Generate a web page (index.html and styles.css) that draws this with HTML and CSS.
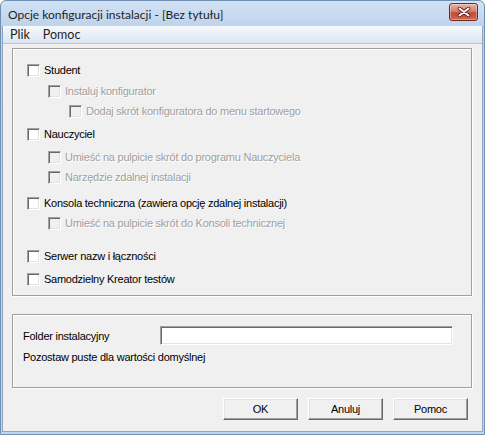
FILE: index.html
```html
<!DOCTYPE html>
<html lang="pl">
<head>
<meta charset="utf-8">
<title>Opcje konfiguracji instalacji</title>
<link rel="stylesheet" href="styles.css">
</head>
<body>
<div class="window">
  <div class="titlebar">
    <span class="title">Opcje konfiguracji instalacji - [Bez tytułu]</span>
    <span class="close">
      <svg width="14" height="10" viewBox="0 0 14 10">
        <path d="M2.5 1.5 L11.5 8.5 M11.5 1.5 L2.5 8.5" stroke="#5a1a12" stroke-width="3.6" stroke-linecap="round"/>
        <path d="M2.5 1.5 L11.5 8.5 M11.5 1.5 L2.5 8.5" stroke="#ffffff" stroke-width="2" stroke-linecap="round"/>
      </svg>
    </span>
  </div>
  <div class="client">
    <div class="menubar">
      <span class="menu-item">Plik</span>
      <span class="menu-item">Pomoc</span>
    </div>
    <div class="content">
      <div class="group group-options">
        <div class="row"><span class="cb"></span><span class="lbl">Student</span></div>
        <div class="row l1 sp1 off"><span class="cb"></span><span class="lbl">Instaluj konfigurator</span></div>
        <div class="row l2 off"><span class="cb"></span><span class="lbl">Dodaj skrót konfiguratora do menu startowego</span></div>
        <div class="row sp3"><span class="cb"></span><span class="lbl">Nauczyciel</span></div>
        <div class="row l1 sp3 off"><span class="cb"></span><span class="lbl">Umieść na pulpicie skrót do programu Nauczyciela</span></div>
        <div class="row l1 off"><span class="cb"></span><span class="lbl">Narzędzie zdalnej instalacji</span></div>
        <div class="row sp6"><span class="cb"></span><span class="lbl">Konsola techniczna (zawiera opcję zdalnej instalacji)</span></div>
        <div class="row l1 off"><span class="cb"></span><span class="lbl">Umieść na pulpicie skrót do Konsoli technicznej</span></div>
        <div class="row sp13"><span class="cb"></span><span class="lbl">Serwer nazw i łączności</span></div>
        <div class="row sp3"><span class="cb"></span><span class="lbl">Samodzielny Kreator testów</span></div>
      </div>
      <div class="group group-folder">
        <div class="folder-row">
          <span class="folder-lbl">Folder instalacyjny</span>
          <span class="input"></span>
        </div>
        <div class="hint">Pozostaw puste dla wartości domyślnej</div>
      </div>
      <div class="buttons">
        <span class="btn">OK</span>
        <span class="btn">Anuluj</span>
        <span class="btn">Pomoc</span>
      </div>
    </div>
  </div>
</div>
</body>
</html>
```

FILE: styles.css
```css
html, body {
  margin: 0;
  padding: 0;
  background: #ffffff;
}

.window {
  width: 485px;
  height: 435px;
  box-sizing: border-box;
  display: flex;
  flex-direction: column;
  background: linear-gradient(to bottom, #d3e2f4 0px, #bcd3ec 26px, #c0d6ee 100%);
  border: 1px solid #6f8fb3;
  border-radius: 6px 6px 0 0;
  padding: 0 1px 2px 1px;
  font-family: "Liberation Sans", Arial, sans-serif;
  font-size: 11px;
  letter-spacing: -0.25px;
  color: #000;
}

.titlebar {
  height: 25px;
  display: flex;
  align-items: center;
  padding-left: 6px;
  padding-right: 5px;
  flex: none;
}

.title {
  font-family: "Lato", "Noto Sans", sans-serif;
  font-size: 12px;
  letter-spacing: 0;
  color: #1e1e1e;
  margin-top: 2px;
}

.close {
  margin-left: auto;
  width: 27px;
  height: 16px;
  margin-top: -4px;
  border: 1px solid #6b2a22;
  border-radius: 3px;
  background: linear-gradient(to bottom, #e8b3a8 0%, #d6806f 45%, #c24a36 55%, #d06a4e 100%);
  box-shadow: inset 0 0 0 1px rgba(255,255,255,0.35);
  display: flex;
  align-items: center;
  justify-content: center;
}

.client {
  flex: 1;
  display: flex;
  flex-direction: column;
  background: #f0f0f0;
  border: 1px solid #8ea4bf;
  border-top: none;
}

.menubar {
  height: 17px;
  flex: none;
  display: flex;
  align-items: center;
  background: linear-gradient(to bottom, #f7f9fc 0%, #e9eff7 50%, #dce6f2 100%);
  border-bottom: 1px solid #b6c5d8;
  font-family: "Lato", "Noto Sans", sans-serif;
  font-size: 12.5px;
  letter-spacing: 0;
  color: #1e1e1e;
}

.menu-item {
  padding: 0 6px 0 7px;
}

.content {
  padding: 4px 10px 0 9px;
}

.group {
  box-sizing: border-box;
  border: 1px solid #a0a0a0;
  box-shadow: inset 1px 1px 0 #ffffff, 1px 1px 0 #ffffff;
}

.group-options {
  height: 248px;
  padding: 11px 0 0 14px;
}

.row {
  height: 20px;
  display: flex;
  align-items: center;
}

.row.l1 { padding-left: 21px; }
.row.l2 { padding-left: 42px; }
.row.sp1 { margin-top: 1px; }
.row.sp3 { margin-top: 3px; }
.row.sp6 { margin-top: 6px; }
.row.sp13 { margin-top: 13px; }

.cb {
  width: 13px;
  height: 13px;
  box-sizing: border-box;
  flex: none;
  background: #ffffff;
  border-style: solid;
  border-width: 1px;
  border-color: #a0a0a0 #ffffff #ffffff #a0a0a0;
  box-shadow: inset 1px 1px 0 #696969, inset -1px -1px 0 #e3e3e3;
}

.lbl {
  margin-left: 4px;
  white-space: nowrap;
}

.off .cb {
  background: #f0f0f0;
}

.off .lbl {
  color: #a0a0a0;
  text-shadow: 1px 1px 0 #ffffff;
}

.group-folder {
  margin-top: 18px;
  height: 74px;
  padding: 11px 0 0 10px;
}

.folder-row {
  display: flex;
  align-items: center;
  height: 19px;
}

.folder-lbl {
  width: 137px;
  flex: none;
}

.input {
  width: 293px;
  height: 19px;
  box-sizing: border-box;
  background: #ffffff;
  border-style: solid;
  border-width: 1px;
  border-color: #a0a0a0 #ffffff #ffffff #a0a0a0;
  box-shadow: inset 1px 1px 0 #696969, inset -1px -1px 0 #e3e3e3;
}

.hint {
  margin-top: 6px;
}

.buttons {
  margin-top: 10px;
  display: flex;
  justify-content: flex-end;
  gap: 10px;
  padding-right: 4px;
}

.btn {
  width: 75px;
  height: 22px;
  box-sizing: border-box;
  display: flex;
  align-items: center;
  justify-content: center;
  background: #f0f0f0;
  border-style: solid;
  border-width: 1px;
  border-color: #ffffff #696969 #696969 #ffffff;
  box-shadow: inset -1px -1px 0 #a0a0a0, inset 1px 1px 0 #e3e3e3;
}
```
